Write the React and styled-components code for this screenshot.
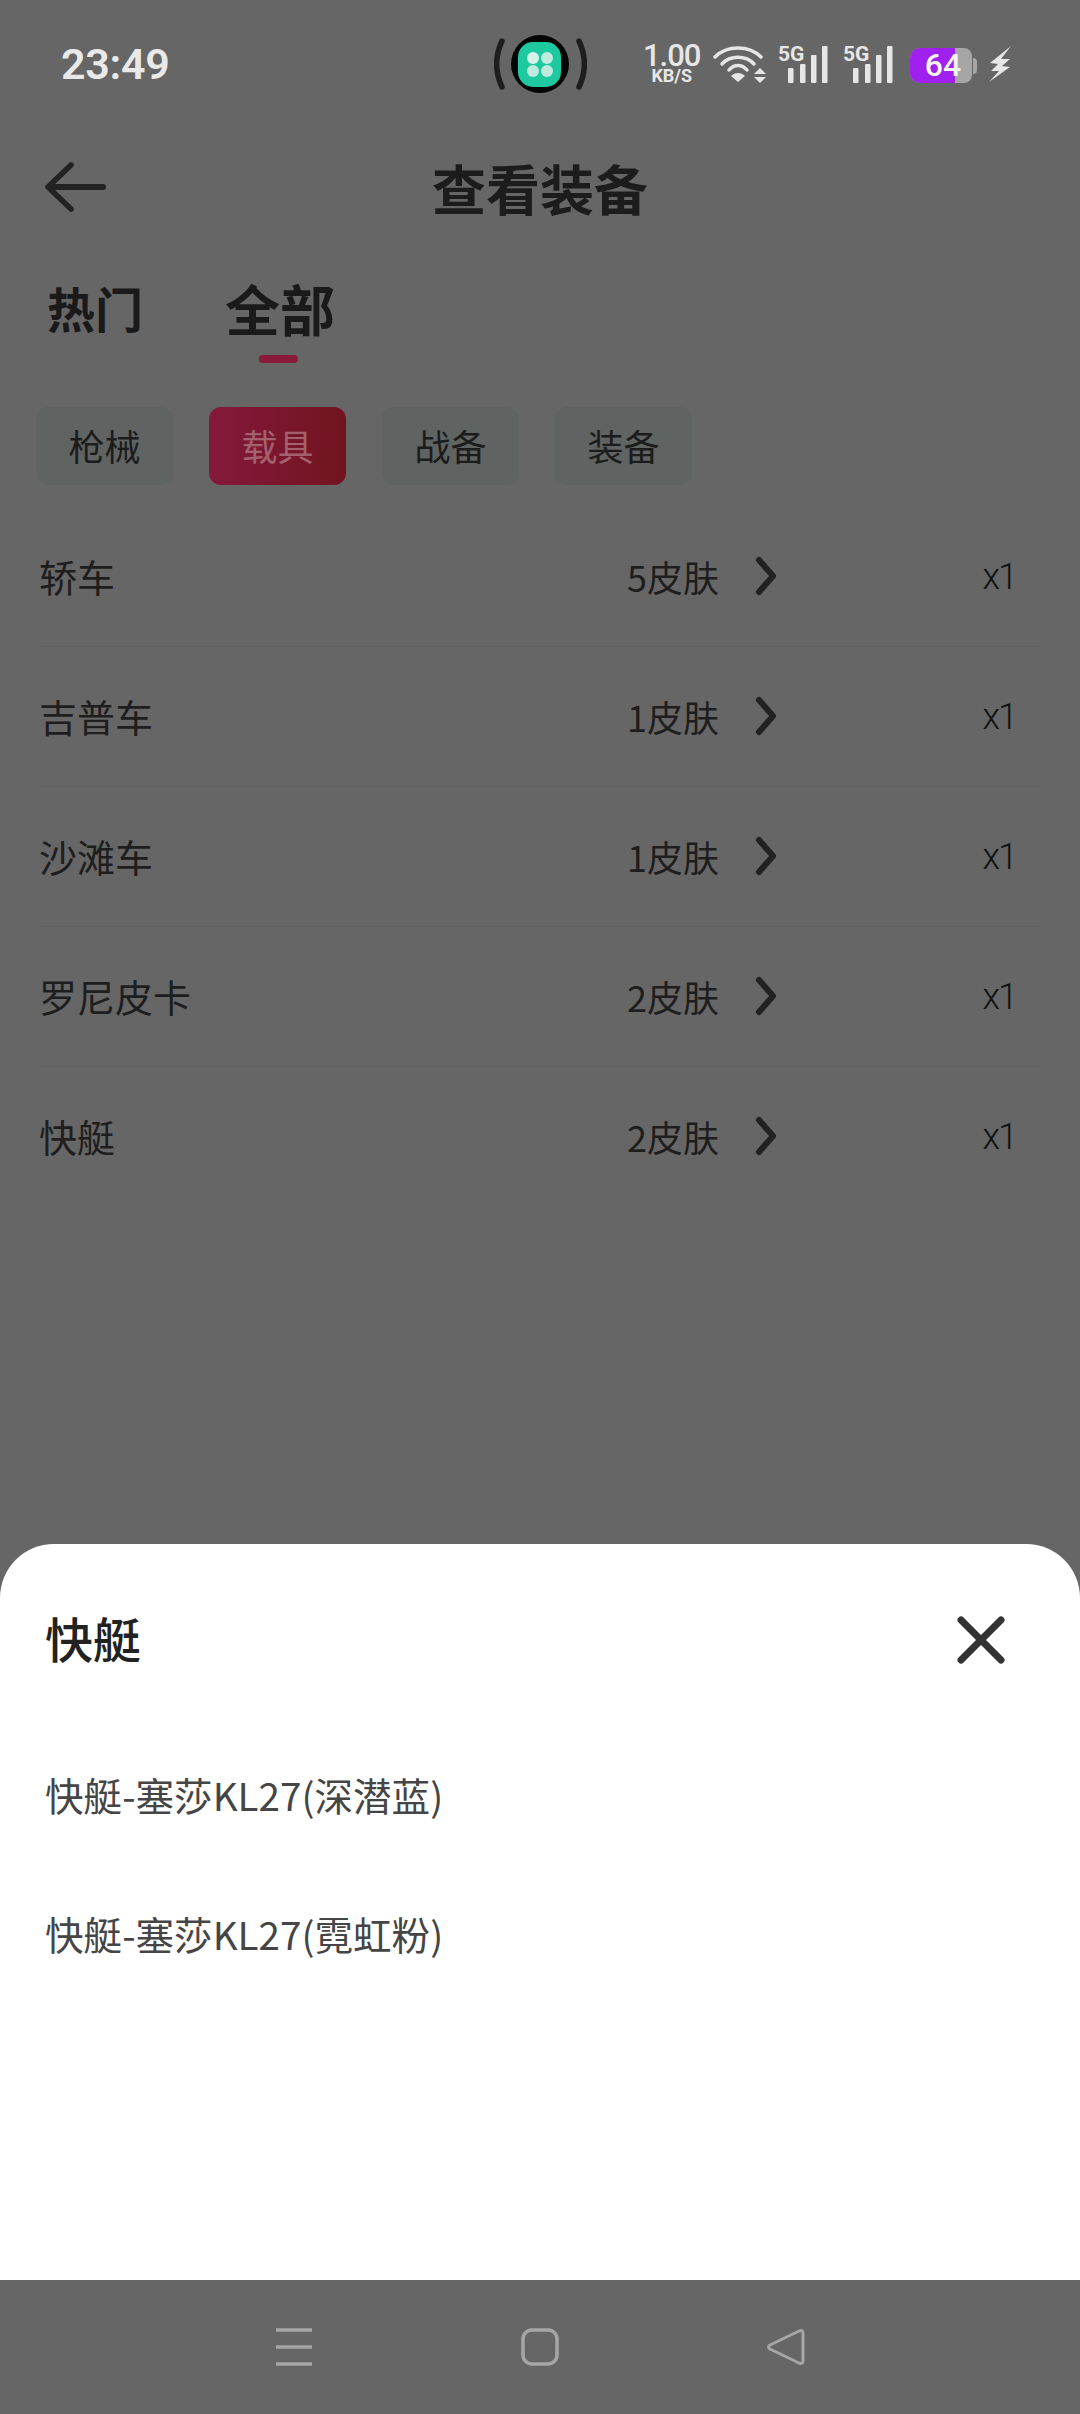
import styled, { createGlobalStyle } from "styled-components";

const GlobalStyle = createGlobalStyle`
  html, body {
    margin: 0;
    padding: 0;
    background: #666666;
  }
  * {
    box-sizing: border-box;
  }
`;

const cjk = `"Noto Sans CJK SC", "Noto Sans", sans-serif`;

const Screen = styled.div`
  width: 1080px;
  height: 2414px;
  display: flex;
  flex-direction: column;
  overflow: hidden;
  background: #666666;
  font-family: ${cjk};
  color: #232323;
`;

const Page = styled.div`
  height: 1544px;
  flex-shrink: 0;
`;

const StatusBar = styled.div`
  height: 128px;
  padding-left: 61px;
  display: flex;
  align-items: center;
`;

const Time = styled.div`
  width: 433px;
  font-family: Roboto, sans-serif;
  font-weight: 600;
  font-size: 43px;
  letter-spacing: -0.3px;
  color: #e9e9e9;
`;

const StatusItem = styled.div`
  margin-left: ${(p) => p.$left || 0}px;
  display: flex;
  flex-direction: column;
  align-items: center;
  color: #e6e6e6;
  font-family: Roboto, sans-serif;
`;

const SpeedItem = styled(StatusItem)`
  margin-top: -2px;
`;

const Speed = styled.span`
  font-size: 31px;
  font-weight: 500;
  line-height: 24px;
  letter-spacing: -1px;
`;

const SpeedUnit = styled.span`
  margin-top: 1px;
  font-size: 18px;
  font-weight: 700;
  line-height: 14px;
`;

const SignalIcon = styled.svg`
  overflow: visible;
`;

const Battery = styled.div`
  position: relative;
  width: 62px;
  height: 35px;
  border-radius: 10px 8px 8px 10px;
  background: #a6a6a6;
`;

const BatteryFill = styled.div`
  height: 100%;
  border-radius: 10px 0 0 10px;
  background: #a020ee;
`;

const BatteryText = styled.span`
  position: absolute;
  inset: 0;
  padding-left: 3px;
  display: flex;
  align-items: center;
  justify-content: center;
  font-family: Roboto, sans-serif;
  font-weight: 500;
  font-size: 32px;
  line-height: 35px;
  color: #f5f5f5;
`;

const BatteryWrap = styled.div`
  margin: 3px 0 0 17px;
  display: flex;
  align-items: center;
  gap: 1px;
`;

const BatteryCap = styled.div`
  width: 4px;
  height: 16px;
  border-radius: 0 4px 4px 0;
  background: #a6a6a6;
`;

const Header = styled.div`
  position: relative;
  height: 124px;
  padding-bottom: 5px;
  display: flex;
  align-items: center;
  justify-content: center;
`;

const BackButton = styled.svg`
  position: absolute;
  left: 44px;
  top: 34px;
`;

const Title = styled.h1`
  margin: 0;
  font-size: 54px;
  line-height: 72px;
  font-weight: 700;
  color: #1c1c1c;
`;

const Tabs = styled.div`
  padding: 19px 0 0 47px;
  display: flex;
  gap: 82px;
`;

const Tab = styled.div`
  display: flex;
  flex-direction: column;
  align-items: center;
  font-size: ${(p) => (p.$active ? 55 : 48)}px;
  line-height: 72px;
  font-weight: 700;
  color: #1a1a1a;
`;

const TabMark = styled.div`
  width: 39px;
  height: 8px;
  margin: 12px 3px 0 0;
  border-radius: 4px;
  background: ${(p) => (p.$show ? "#8a1a3c" : "transparent")};
`;

const Chips = styled.div`
  margin-top: 44px;
  padding-left: 36px;
  display: flex;
  gap: 36px;
`;

const Chip = styled.div`
  width: 137px;
  height: 78px;
  padding-bottom: 3px;
  border-radius: 12px;
  display: flex;
  align-items: center;
  justify-content: center;
  font-size: 36px;
  background: ${(p) =>
    p.$active ? "linear-gradient(90deg, #84193b, #71141f)" : "#5f6362"};
  color: ${(p) => (p.$active ? "#a3616f" : "#1c1c1c")};
`;

const List = styled.div`
  margin-top: 22px;
  padding: 0 40px;
`;

const Row = styled.div`
  height: 140px;
  padding-bottom: 2px;
  display: grid;
  grid-template-columns: 587px 130px 1fr auto;
  align-items: center;
  font-size: 36px;
  color: #1e1e1e;
  border-bottom: 1px solid ${(p) => (p.$last ? "transparent" : "#616161")};
`;

const Name = styled.span`
  margin-left: -1px;
  font-size: 38px;
`;

const Count = styled.span`
  white-space: nowrap;
`;

const Chevron = styled.svg`
  margin-left: -3px;
`;

const Amount = styled.span`
  font-family: Roboto, sans-serif;
  font-weight: 300;
  font-size: 36px;
  letter-spacing: -2px;
  margin: 3px 24px 0 0;
  color: #141414;
`;

const Sheet = styled.div`
  flex: 1;
  background: #ffffff;
  border-radius: 54px 54px 0 0;
  padding: 57px 74px 0 45px;
`;

const SheetHeader = styled.div`
  display: flex;
  align-items: center;
  justify-content: space-between;
  font-size: 48px;
  font-weight: 500;
  line-height: 72px;
  color: #222222;
`;

const CloseIcon = styled.svg`
  margin-top: 5px;
`;

const SheetItem = styled.div`
  height: 139px;
  display: flex;
  align-items: center;
  font-size: 38.6px;
  color: #454545;
`;

const SheetList = styled.div`
  margin-top: 51px;
  display: flex;
  flex-direction: column;
`;

const NavBar = styled.div`
  height: 134px;
  flex-shrink: 0;
  display: flex;
  align-items: center;
  justify-content: center;
  gap: 208px;
`;

const rows = [
  ["轿车", "5皮肤"],
  ["吉普车", "1皮肤"],
  ["沙滩车", "1皮肤"],
  ["罗尼皮卡", "2皮肤"],
  ["快艇", "2皮肤"],
];

const Signal = () => (
  <SignalIcon width="50" height="38" viewBox="0 0 50 38">
    <text x="0" y="16" fontFamily="Roboto, sans-serif" fontWeight="700" fontSize="21" fill="#e6e6e6">
      5G
    </text>
    <rect x="10" y="23" width="5.5" height="15" rx="1" fill="#e6e6e6" />
    <rect x="22" y="19" width="5.5" height="19" rx="1" fill="#e6e6e6" />
    <rect x="33" y="10" width="5.5" height="28" rx="1" fill="#e6e6e6" />
    <rect x="44" y="1" width="5.5" height="37" rx="1" fill="#e6e6e6" />
  </SignalIcon>
);

const App = () => {
  return (
    <Screen>
      <GlobalStyle />
      <Page>
        <StatusBar>
          <Time>23:49</Time>
          <svg width="93" height="60" viewBox="0 0 93 60">
            <path d="M8 7C1 22 1 38 8 53" fill="none" stroke="#1e1e1e" strokeWidth="5.5" strokeLinecap="round" />
            <path d="M85 7C92 22 92 38 85 53" fill="none" stroke="#1e1e1e" strokeWidth="5.5" strokeLinecap="round" />
            <circle cx="46" cy="30" r="29" fill="#050505" />
            <rect x="24" y="8" width="43" height="45" rx="15" fill="#1fc9a0" />
            <circle cx="39" cy="24" r="6" fill="#d6f3ea" />
            <circle cx="53" cy="24" r="6" fill="#bdebdd" />
            <circle cx="39" cy="37" r="6" fill="#bdebdd" />
            <circle cx="53" cy="37" r="6" fill="#bdebdd" />
          </svg>
          <SpeedItem $left={56}>
            <Speed>1.00</Speed>
            <SpeedUnit>KB/S</SpeedUnit>
          </SpeedItem>
          <StatusItem $left={13}>
            <svg width="53" height="38" viewBox="0 0 53 38">
              <path d="M2 12C14 0 36 0 48 12" fill="none" stroke="#e6e6e6" strokeWidth="3.5" strokeLinecap="round" />
              <path d="M9 19C17 10 33 10 41 19" fill="none" stroke="#e6e6e6" strokeWidth="3.5" strokeLinecap="round" />
              <path d="M16 25C21 19 29 19 34 25" fill="none" stroke="#e6e6e6" strokeWidth="3.5" strokeLinecap="round" />
              <path d="M18 31C22 27 28 27 32 31L25 37Z" fill="#e6e6e6" />
              <path d="M47 23L53 29H41Z M41 32H53L47 38Z" fill="#e6e6e6" />
            </svg>
          </StatusItem>
          <StatusItem $left={12}>
            <Signal />
          </StatusItem>
          <StatusItem $left={15}>
            <Signal />
          </StatusItem>
          <BatteryWrap>
            <Battery>
              <BatteryFill style={{ width: "71%" }} />
              <BatteryText>64</BatteryText>
            </Battery>
            <BatteryCap />
          </BatteryWrap>
          <StatusItem $left={12}>
            <svg width="22" height="36" viewBox="0 0 22 36">
              <path d="M22 0L1 17L9 18L2 25L10 25L0 36L21 21L13 20L21 13L12 13Z" fill="#e6e6e6" />
            </svg>
          </StatusItem>
        </StatusBar>

        <Header>
          <BackButton width="62" height="50" viewBox="0 0 62 50">
            <path d="M27 3L4 25L27 47" fill="none" stroke="#222222" strokeWidth="5.5" strokeLinecap="round" strokeLinejoin="round" />
            <path d="M10 25H59" fill="none" stroke="#222222" strokeWidth="6" strokeLinecap="round" />
          </BackButton>
          <Title>查看装备</Title>
        </Header>

        <Tabs>
          <Tab>
            热门
            <TabMark />
          </Tab>
          <Tab $active>
            全部
            <TabMark $show />
          </Tab>
        </Tabs>

        <Chips>
          <Chip>枪械</Chip>
          <Chip $active>载具</Chip>
          <Chip>战备</Chip>
          <Chip>装备</Chip>
        </Chips>

        <List>
          {rows.map(([name, count], i) => (
            <Row key={name} $last={i === rows.length - 1}>
              <Name>{name}</Name>
              <Count>{count}</Count>
              <Chevron width="24" height="40" viewBox="0 0 24 40">
                <path d="M5 4L19 20L5 36" fill="none" stroke="#222222" strokeWidth="6" strokeLinecap="round" strokeLinejoin="round" />
              </Chevron>
              <Amount>x1</Amount>
            </Row>
          ))}
        </List>
      </Page>

      <Sheet>
        <SheetHeader>
          快艇
          <CloseIcon width="50" height="50" viewBox="0 0 50 50">
            <path d="M5 5L45 45M45 5L5 45" fill="none" stroke="#333333" strokeWidth="7" strokeLinecap="round" />
          </CloseIcon>
        </SheetHeader>
        <SheetList>
          <SheetItem>快艇-塞莎KL27(深潜蓝)</SheetItem>
          <SheetItem>快艇-塞莎KL27(霓虹粉)</SheetItem>
        </SheetList>
      </Sheet>

      <NavBar>
        <svg width="38" height="38" viewBox="0 0 38 38">
          <path d="M1 2H37M1 19H37M1 36H37" fill="none" stroke="#a6a6a6" strokeWidth="3.5" />
        </svg>
        <svg width="38" height="38" viewBox="0 0 38 38">
          <rect x="2" y="2" width="34" height="34" rx="9" fill="none" stroke="#a6a6a6" strokeWidth="3.5" />
        </svg>
        <svg width="38" height="38" viewBox="0 0 38 38">
          <path d="M32 3Q36 1.5 36 5V33Q36 36.5 32 35L3 21Q0 19 3 17Z" fill="none" stroke="#a6a6a6" strokeWidth="3" strokeLinejoin="round" />
        </svg>
      </NavBar>
    </Screen>
  );
};

export default App;
